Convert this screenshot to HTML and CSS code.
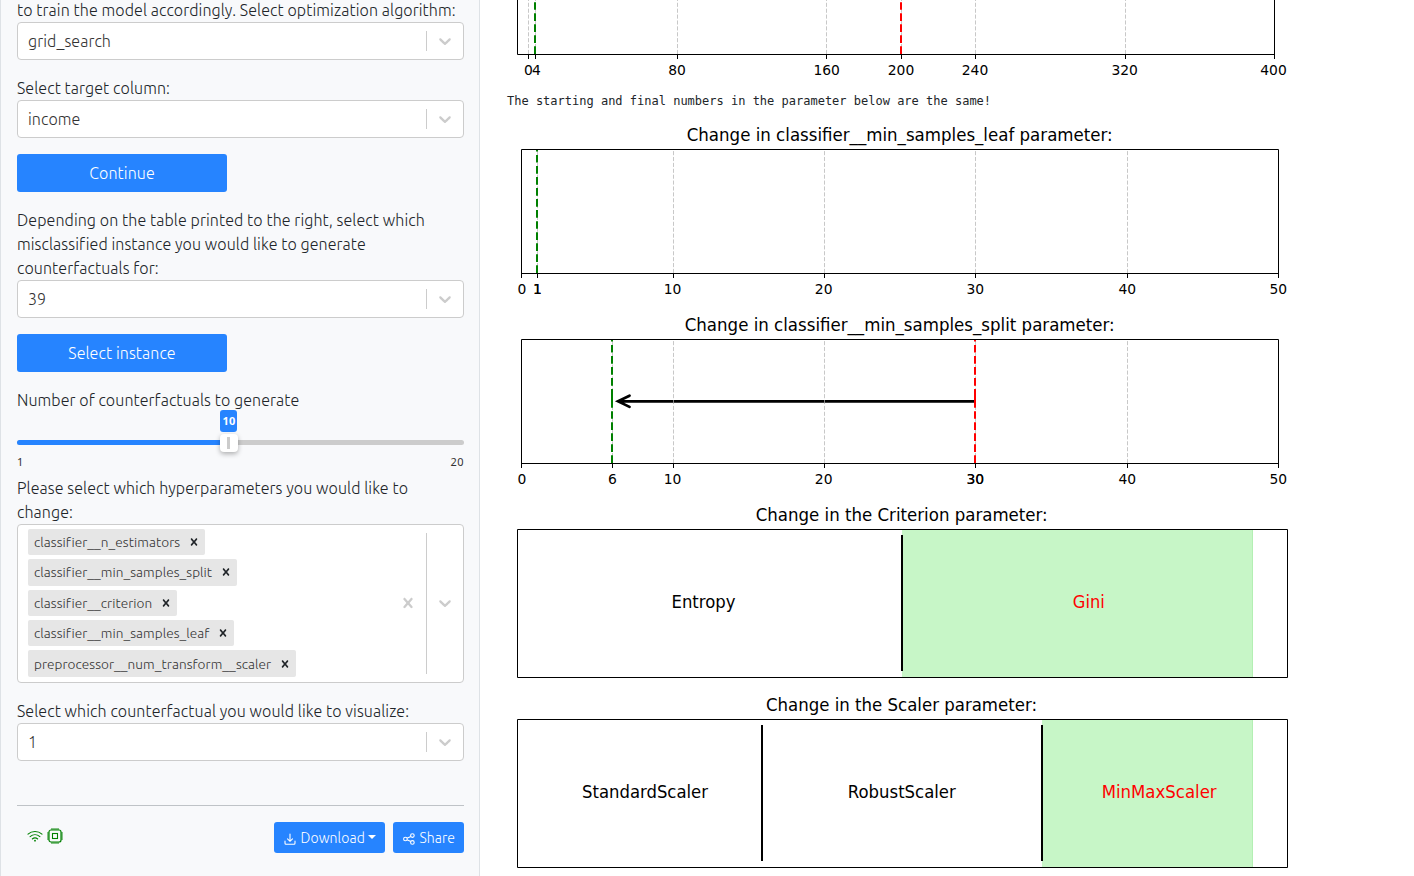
FILE: index.html
```html
<!DOCTYPE html>
<html lang="en">
<head>
<meta charset="utf-8">
<title>Counterfactual explorer</title>
<link rel="stylesheet" href="styles.css">
</head>
<body>
<svg class="defs" width="0" height="0">
  <symbol id="chev" viewBox="0 0 20 20"><path d="M4.516 7.548c0.436-0.446 1.043-0.481 1.576 0l3.908 3.747 3.908-3.747c0.533-0.481 1.141-0.446 1.574 0 0.436 0.445 0.408 1.197 0 1.615-0.406 0.418-4.695 4.502-4.695 4.502-0.217 0.223-0.502 0.335-0.787 0.335s-0.57-0.112-0.789-0.335c0 0-4.287-4.084-4.695-4.502s-0.436-1.17 0-1.615z"/></symbol>
  <symbol id="cross" viewBox="0 0 20 20"><path d="M14.348 14.849c-0.469 0.469-1.229 0.469-1.697 0l-2.651-3.030-2.651 3.029c-0.469 0.469-1.229 0.469-1.697 0-0.469-0.469-0.469-1.229 0-1.697l2.758-3.15-2.759-3.152c-0.469-0.469-0.469-1.228 0-1.697s1.228-0.469 1.697 0l2.652 3.031 2.651-3.031c0.469-0.469 1.228-0.469 1.697 0s0.469 1.229 0 1.697l-2.758 3.152 2.758 3.15c0.469 0.469 0.469 1.229 0 1.698z"/></symbol>
</svg>
<div class="app">
  <aside class="side">
    <label class="l1">to train the model accordingly. Select optimization algorithm:</label>
    <div class="select"><span class="val">grid_search</span><i class="sep"></i><svg class="chev"><use href="#chev"/></svg></div>
    <label>Select target column:</label>
    <div class="select"><span class="val">income</span><i class="sep"></i><svg class="chev"><use href="#chev"/></svg></div>
    <button class="btn">Continue</button>
    <label>Depending on the table printed to the right, select which<br>misclassified instance you would like to generate<br>counterfactuals for:</label>
    <div class="select"><span class="val">39</span><i class="sep"></i><svg class="chev"><use href="#chev"/></svg></div>
    <button class="btn">Select instance</button>
    <label>Number of counterfactuals to generate</label>
    <div class="slider">
      <div class="track"><div class="fill"></div></div>
      <div class="bubble">10</div>
      <div class="thumb"></div>
      <div class="ends"><span>1</span><span>20</span></div>
    </div>
    <label class="tight">Please select which hyperparameters you would like to<br>change:</label>
    <div class="select multi">
      <div class="tags">
        <div class="tag w1"><span>classifier__n_estimators</span><svg><use href="#cross"/></svg></div>
        <div class="tag w2"><span>classifier__min_samples_split</span><svg><use href="#cross"/></svg></div>
        <div class="tag w3"><span>classifier__criterion</span><svg><use href="#cross"/></svg></div>
        <div class="tag w4"><span>classifier__min_samples_leaf</span><svg><use href="#cross"/></svg></div>
        <div class="tag w5"><span>preprocessor__num_transform__scaler</span><svg><use href="#cross"/></svg></div>
      </div>
      <svg class="clear"><use href="#cross"/></svg><i class="sep"></i><svg class="chev"><use href="#chev"/></svg>
    </div>
    <label>Select which counterfactual you would like to visualize:</label>
    <div class="select"><span class="val">1</span><i class="sep"></i><svg class="chev"><use href="#chev"/></svg></div>
    <footer>
      <svg class="wifi" viewBox="0 0 16 16" width="16" height="16" fill="none" stroke="#008000" stroke-linecap="round"><path d="M1 6.1C5 2.6 11 2.6 15 6.1M3.1 8.6C6 6.1 10 6.1 12.9 8.6M5.3 11C7 9.6 9 9.6 10.7 11" stroke-width="1.1"/><circle cx="8" cy="12.7" r=".9" fill="#008000" stroke="none"/></svg>
      <svg class="chip" viewBox="0 0 16 16" width="16" height="16"><path d="M4 0h8v2H4zM4 14h8v2H4zM0 4h2v8H0zM14 4h2v8h-2z" fill="#85c186"/><g fill="none" stroke="#008000"><rect x="2" y="2" width="12" height="12" rx="2" stroke-width="1.2"/><rect x="5.5" y="5.5" width="5" height="5" stroke-width="1.1"/></g></svg>
      <button class="small dl"><svg viewBox="0 0 12 12" width="12" height="12" fill="none" stroke="#fff" stroke-width="1.1" stroke-linecap="round"><path d="M6 1v7M3.5 5.8L6 8.3l2.5-2.5M1 8v2.2q0 1 1 1h8q1 0 1-1V8"/></svg><span>Download</span><i class="caret"></i></button>
      <button class="small sh"><svg viewBox="0 0 12 12" width="12" height="12" fill="none" stroke="#fff" stroke-width="1.1"><circle cx="2.4" cy="6" r="1.8"/><circle cx="9.4" cy="2.6" r="1.8"/><circle cx="9.4" cy="9.4" r="1.8"/><path d="M4 5.2l3.8-1.8M4 6.8l3.8 1.8"/></svg><span>Share</span></button>
    </footer>
  </aside>
  <main>
    <svg class="plot first" viewBox="507 0 800 90" width="800" height="90">
      <path class="grid" d="M528.5 54V0M535.5 54V0M677.5 54V0M826.5 54V0M901.5 54V0M975.5 54V0M1125.5 54V0"/>
      <path class="mark g" d="M535 54V0"/><path class="mark r" d="M901 54V0"/>
      <path class="axis" d="M517.5 0V54.5H1274.5V0M528.5 54v5M535.5 54v5M677.5 54v5M826.5 54v5M901.5 54v5M975.5 54v5M1125.5 54v5M1274.5 54v5"/>
      <g class="tick"><text x="528.3" y="75">0</text><text x="536.3" y="75">4</text><text x="677" y="75">80</text><text x="826.7" y="75">160</text><text x="901" y="75">200</text><text x="975" y="75">240</text><text x="1124.7" y="75">320</text><text x="1273.5" y="75">400</text></g>
    </svg>
    <pre>The starting and final numbers in the parameter below are the same!</pre>
    <svg class="plot" viewBox="507 120 800 190" width="800" height="190">
      <text class="title" x="899.7" y="141" textLength="426" lengthAdjust="spacingAndGlyphs">Change in classifier__min_samples_leaf parameter:</text>
      <path class="grid" d="M537.5 273V150M673.5 273V150M824.5 273V150M975.5 273V150M1127.5 273V150"/>
      <path class="mark g" d="M537 273V150"/>
      <path class="axis" d="M521.5 149.5H1278.5V273.5H521.5ZM521.5 273v5M537.5 273v5M673.5 273v5M824.5 273v5M975.5 273v5M1127.5 273v5M1278.5 273v5"/>
      <g class="tick"><text x="522" y="294">0</text><text x="537.3" y="294">1</text><text x="537.3" y="294">1</text><text x="672.5" y="294">10</text><text x="823.7" y="294">20</text><text x="975.3" y="294">30</text><text x="1127.3" y="294">40</text><text x="1278.3" y="294">50</text></g>
    </svg>
    <svg class="plot" viewBox="507 310 800 190" width="800" height="190">
      <text class="title" x="899.7" y="331" textLength="430" lengthAdjust="spacingAndGlyphs">Change in classifier__min_samples_split parameter:</text>
      <path class="arrow" d="M618 401.3H974M629.5 395.7L618 401.3L629.5 406.9"/>
      <path class="grid" d="M612.5 463V340M673.5 463V340M824.5 463V340M975.5 463V340M1127.5 463V340"/>
      <path class="mark g" d="M612 463V340"/><path class="mark r" d="M975 463V340"/>
      <path class="core g" d="M612 389.5V406.5"/><path class="core r" d="M975 389.5V406.5"/>
      <path class="axis" d="M521.5 339.5H1278.5V463.5H521.5ZM521.5 463v5M612.5 463v5M673.5 463v5M824.5 463v5M975.5 463v5M1127.5 463v5M1278.5 463v5"/>
      <g class="tick"><text x="522" y="484">0</text><text x="612.3" y="484">6</text><text x="672.5" y="484">10</text><text x="823.7" y="484">20</text><text x="975.3" y="484">30</text><text x="975.3" y="484">30</text><text x="1127.3" y="484">40</text><text x="1278.3" y="484">50</text></g>
    </svg>
    <svg class="plot" viewBox="507 500 800 190" width="800" height="190">
      <text class="title" x="901.7" y="521" textLength="292" lengthAdjust="spacingAndGlyphs">Change in the Criterion parameter:</text>
      <rect class="area" x="902" y="530" width="351" height="147"/><path class="edge" d="M1252.5 530v147"/>
      <path class="bar" d="M902 535V671"/>
      <path class="axis" d="M517.5 529.5H1287.5V677.5H517.5Z"/>
      <text class="title" x="703.5" y="608" textLength="64" lengthAdjust="spacingAndGlyphs">Entropy</text>
      <text class="title red" x="1088.8" y="608" textLength="32" lengthAdjust="spacingAndGlyphs">Gini</text>
    </svg>
    <svg class="plot" viewBox="507 690 800 190" width="800" height="190">
      <text class="title" x="901.5" y="711" textLength="271" lengthAdjust="spacingAndGlyphs">Change in the Scaler parameter:</text>
      <rect class="area" x="1042" y="720" width="211" height="147"/><path class="edge" d="M1252.5 720v147"/>
      <path class="bar" d="M762 725V861M1042 725V861"/>
      <path class="axis" d="M517.5 719.5H1287.5V867.5H517.5Z"/>
      <text class="title" x="645" y="798" textLength="126" lengthAdjust="spacingAndGlyphs">StandardScaler</text>
      <text class="title" x="901.8" y="798" textLength="108" lengthAdjust="spacingAndGlyphs">RobustScaler</text>
      <text class="title red" x="1159.2" y="798" textLength="115" lengthAdjust="spacingAndGlyphs">MinMaxScaler</text>
    </svg>
  </main>
</div>
</body>
</html>
```

FILE: styles.css
```css
* { box-sizing: border-box; }
body { margin: 0; background: #fff; color: #212529; font: 300 16px/24px Ubuntu, "Open Sans", "Noto Sans", sans-serif; letter-spacing: .09px; }
svg { display: block; flex: none; }
.defs { display: none; }
.app { display: flex; height: 876px; overflow: hidden; }
.side { width: 480px; flex: none; background: #f8f9fb; border: solid #dee2e6; border-width: 0 1px; padding: 0 15px 0 16px; }
label { display: block; margin-top: 16px; white-space: nowrap; }
label.l1 { margin-top: -2px; }
label.tight { margin-top: 0; }
.select { display: flex; align-items: center; height: 38px; background: #fff; border: 1px solid #ccc; border-radius: 4px; }
.val { flex: 1; padding-left: 10px; color: #333; }
.sep { width: 1px; align-self: stretch; margin: 8px 0; background: #ccc; }
.chev { width: 20px; height: 20px; margin: 0 8px; fill: #ccc; }
.clear { width: 20px; height: 20px; margin: 0 8px; fill: #ccc; }
.btn { display: block; width: 210px; height: 38px; margin-top: 16px; padding: 0; border: 0; border-radius: 3px; background: #2684ff; color: #fff; font: inherit; letter-spacing: inherit; }
.slider { position: relative; height: 64px; padding-top: 28px; }
.track { height: 5px; border-radius: 3px; background: #ccc; }
.fill { width: 211px; height: 5px; border-radius: 3px; background: #2684ff; }
.bubble { position: absolute; left: 203px; top: -2px; width: 17px; height: 22px; border-radius: 3px; background: #2684ff; color: #fff; font: 700 11px/22px "Noto Sans", sans-serif; text-align: center; padding-left: 1px; }
.thumb { position: absolute; left: 203px; top: 22px; width: 18px; height: 18px; border-radius: 4px; background: linear-gradient(#ccc, #ccc) 7px 3px / 3px 12px no-repeat #fff; box-shadow: 0 2px 5px rgba(0, 0, 0, .3); }
.ends { display: flex; justify-content: space-between; margin-top: 8px; font: 400 11px/18px "Noto Sans", sans-serif; letter-spacing: .4px; color: #333; }
.multi { height: 159px; }
.tags { flex: 1; padding-left: 10px; margin-top: -1.4px; display: flex; flex-direction: column; gap: 4px; }
.tag { display: flex; align-items: center; justify-content: space-between; height: 26.4px; padding: 0 4px 0 6px; border-radius: 2px; background: #e6e6e6; color: #333; font-size: 13.6px; letter-spacing: .06px; white-space: nowrap; }
.tag svg { width: 14px; height: 14px; fill: #212529; }
.multi .chev, .multi .clear { margin-top: -1px; }
.w1 { width: 177px; } .w2 { width: 209px; } .w3 { width: 149px; } .w4 { width: 206px; } .w5 { width: 268px; }
footer { display: flex; height: 49px; margin-top: 44px; padding-top: 16px; border-top: 1px solid #bfc3c7; }
.wifi { margin: 6px 4px 0 10px; }
.chip { margin-top: 6px; }
.small { display: flex; align-items: center; height: 31px; padding: 0 8px 0 10px; border: 0; border-radius: 3px; background: #2684ff; color: #fff; font: inherit; font-size: 14px; letter-spacing: .1px; gap: 4.5px; white-space: nowrap; }
.small svg { margin-top: 3px; }
.dl { width: 111px; margin-left: auto; margin-right: 8px; }
.sh { width: 71px; }
.caret { border: 4px solid transparent; border-top-color: #fff; border-bottom: 0; margin: -2px 0 0 -1px; }
main { flex: 1; padding-left: 27px; letter-spacing: 0; }
pre { margin: 0; height: 30px; padding-top: 3px; font: 12px/16px "DejaVu Sans Mono", monospace; color: #212529; }
.plot text { font-family: "DejaVu Sans", sans-serif; font-weight: 400; text-anchor: middle; }
.plot .title { font-size: 17.5px; }
.tick text { font-size: 13.89px; }
.plot .red { fill: #f00; }
.axis { fill: none; stroke: #000; stroke-width: 1; }
.grid { fill: none; stroke: #b0b0b0; stroke-opacity: .7; stroke-dasharray: 4.11 1.78; }
.mark { stroke-width: 2; stroke-dasharray: 7.71 3.33; }
.core { stroke-width: 2; }
.g { stroke: #008000; }
.r { stroke: #f00; }
.arrow { fill: none; stroke: #000; stroke-width: 2.7; stroke-linecap: round; }
.bar { stroke: #000; stroke-width: 2; }
.area { fill: #c7f6c7; }
.edge { stroke: #b4efb4; }
```
